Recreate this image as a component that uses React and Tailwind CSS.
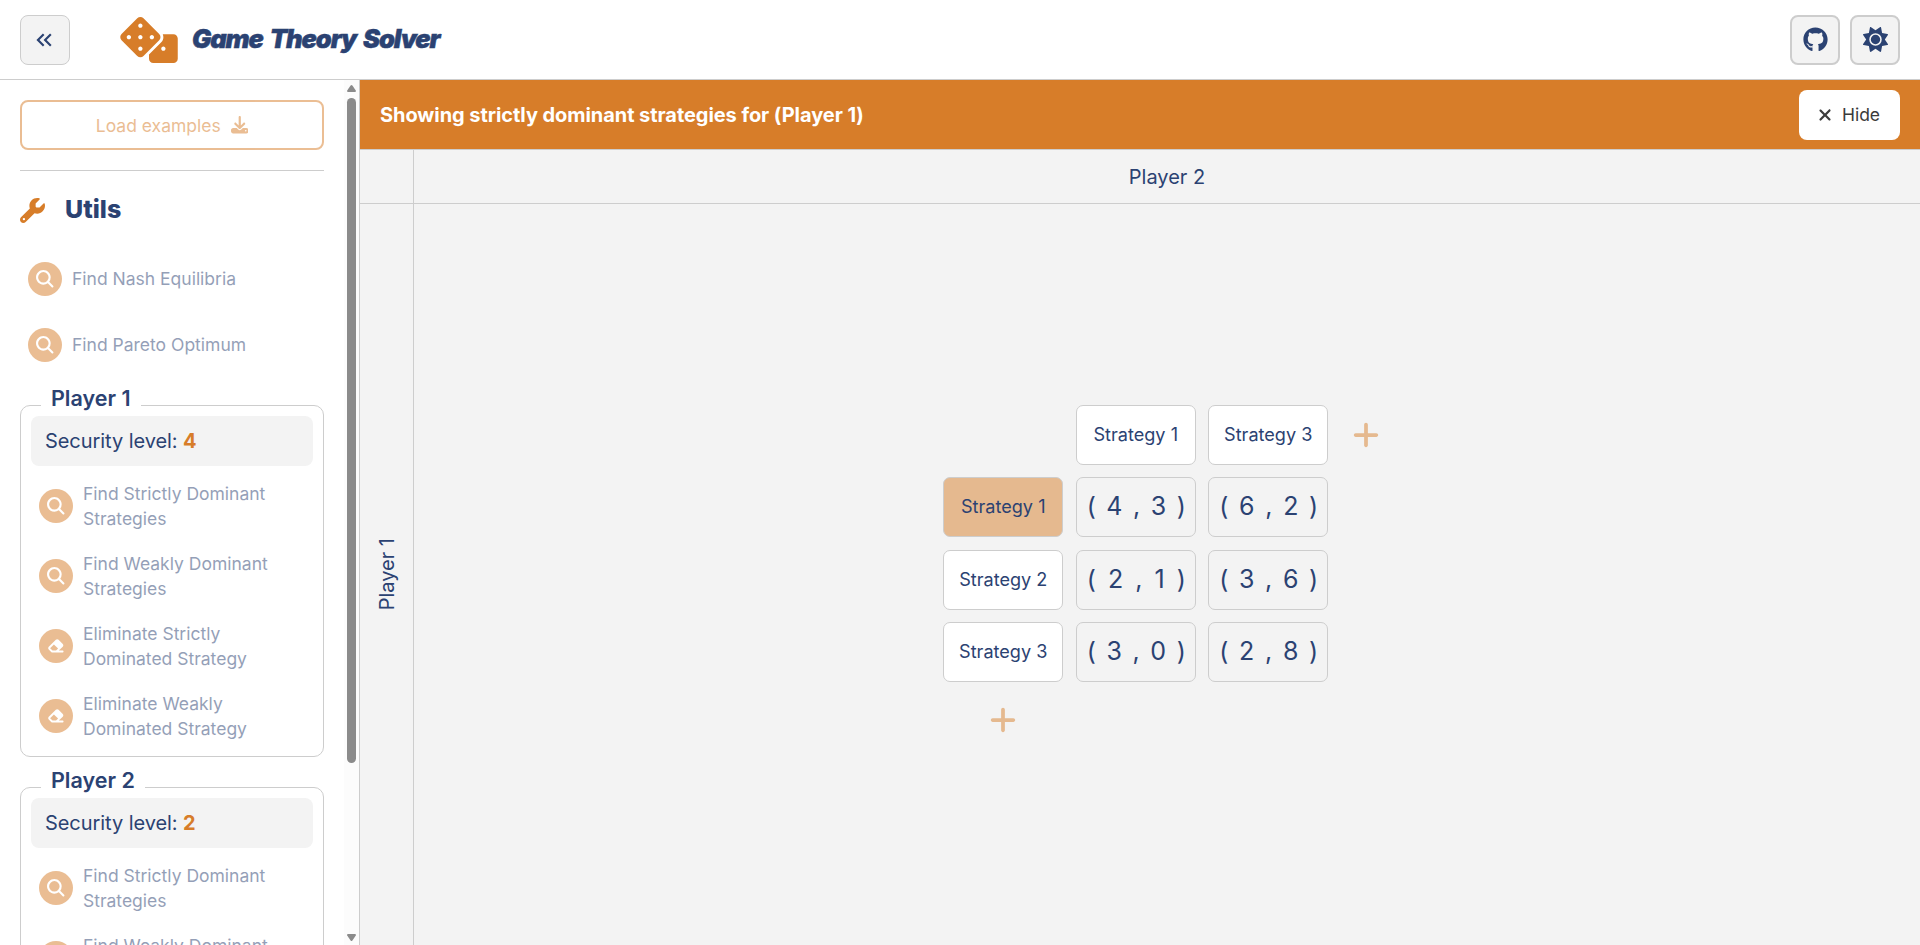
import React from "react";
import { FaDice } from "react-icons/fa";
import { FaDownload, FaEraser, FaGithub, FaPlus, FaSun, FaWrench, FaXmark } from "react-icons/fa6";
import { MdKeyboardDoubleArrowLeft } from "react-icons/md";
import { IoSearch } from "react-icons/io5";

function Util({ icon: Icon, children }) {
  return (
    <div className="flex items-center gap-[10px] opacity-50">
      <span className="grid size-[34px] shrink-0 place-items-center rounded-full bg-[#d77d29] text-white">
        <Icon className={Icon === FaEraser ? "size-[17.5px]" : "size-[21.5px]"} />
      </span>
      <span className="text-[17.5px] leading-[25px]">{children}</span>
    </div>
  );
}

function Player({ n, level, className }) {
  return (
    <fieldset className={"min-w-0 shrink-0 rounded-[10px] border border-[#cdcdcd] px-[10px] pb-[15px] " + className}>
      <legend className="ml-[10px] px-[10px] text-[21.5px] leading-[26px] font-semibold">
        <span className="relative -top-[7px]">Player {n}</span>
      </legend>
      <div className="-mt-[2px] flex h-[50px] items-center gap-[5.5px] rounded-[8px] bg-[#f3f3f3] px-[14px] text-[20px]">
        <span className="tracking-[-0.06px]">Security level:</span>
        <b className="font-bold text-[#d77d29]">{level}</b>
      </div>
      <div className="mt-[15px] flex flex-col gap-[20px] pl-[8px]">
        <Util icon={IoSearch}>Find Strictly Dominant<br />Strategies</Util>
        <Util icon={IoSearch}>Find Weakly Dominant<br />Strategies</Util>
        <Util icon={FaEraser}>Eliminate Strictly<br />Dominated Strategy</Util>
        <Util icon={FaEraser}>Eliminate Weakly<br />Dominated Strategy</Util>
      </div>
    </fieldset>
  );
}

const rows = [
  { name: "Strategy 1", active: true, cells: [[4, 3], [6, 2]] },
  { name: "Strategy 2", cells: [[2, 1], [3, 6]] },
  { name: "Strategy 3", cells: [[3, 0], [2, 8]] },
];

function Strategy({ active, children }) {
  return (
    <div className={"flex h-[60px] items-center justify-center rounded-[7px] border border-[#cdcdcd] text-[18.1px] " + (active ? "bg-[#e5b98f]" : "bg-white")}>
      {children}
    </div>
  );
}

function Payoff({ v }) {
  return (
    <div className="flex h-[60px] items-center justify-between rounded-[7px] border border-[#cdcdcd] pr-[9px] pl-[10px] text-[25px]">
      <span>(</span>
      <span>{v[0]}</span>
      <span>,</span>
      <span>{v[1]}</span>
      <span>)</span>
    </div>
  );
}

function Add({ className }) {
  return (
    <button className={"grid place-items-center text-[#e5b98f] " + (className || "")}>
      <FaPlus className="size-[30px]" />
    </button>
  );
}

function Scrollbar() {
  return (
    <div className="flex w-[15px] flex-col items-center bg-[#fcfcfc]">
      <svg viewBox="0 0 9 7" className="mt-[5px] h-[7px] w-[9px] fill-[#8b8b8b]"><path d="M3.6.6Q4.5-.4 5.4.6L8.8 5.6Q9.2 7 8 7H1Q-.2 7 .2 5.6Z" /></svg>
      <div className="mt-[6px] h-[665px] w-[9px] rounded-full bg-[#8b8b8b]" />
      <svg viewBox="0 0 9 7" className="mt-auto mb-[4px] h-[7px] w-[9px] fill-[#8b8b8b]"><path d="M3.6 6.4Q4.5 7.4 5.4 6.4L8.8 1.4Q9.2 0 8 0H1Q-.2 0 .2 1.4Z" /></svg>
    </div>
  );
}

export default function App() {
  return (
    <div className="flex h-[945px] w-full flex-col overflow-hidden bg-white font-['Inter',sans-serif] text-[#2b4272]">
      <header className="flex h-[80px] shrink-0 items-center border-b border-[#cdcdcd] px-[20px]">
        <button className="grid size-[50px] place-items-center rounded-[8px] border border-[#cdcdcd] bg-[#f3f3f3]">
          <MdKeyboardDoubleArrowLeft className="mr-[2px] size-[26px]" />
        </button>
        <FaDice className="ml-[50px] h-[46px] w-[58px] text-[#d77d29]" />
        <h1 className="-mt-px ml-[14px] text-[25.5px] font-black tracking-[-1.1px] italic [-webkit-text-stroke:0.5px_#2b4272] [word-spacing:3px]">Game Theory Solver</h1>
        <div className="ml-auto flex gap-[10px]">
          <button className="grid size-[50px] place-items-center rounded-[8px] border-2 border-[#cdcdcd] bg-[#f3f3f3]">
            <FaGithub className="size-[25px]" />
          </button>
          <button className="grid size-[50px] place-items-center rounded-[8px] border-2 border-[#cdcdcd] bg-[#f3f3f3]">
            <FaSun className="size-[25px]" />
          </button>
        </div>
      </header>
      <div className="flex min-h-0 flex-1">
        <aside className="flex w-[360px] shrink-0 border-r border-[#cdcdcd]">
          <div className="flex h-full w-[344px] flex-col overflow-hidden px-[20px] pt-[20px]">
            <button className="flex h-[50px] shrink-0 items-center justify-center gap-[10px] rounded-[8px] border-2 border-[#d77d29] text-[17.5px] text-[#d77d29] opacity-50">
              <span className="pt-[2px]">Load examples</span> <FaDownload className="size-[17.5px]" />
            </button>
            <hr className="mt-[20px] border-[#cdcdcd]" />
            <h2 className="mt-[24px] flex h-[30px] shrink-0 items-center gap-[20px] text-[25px] font-extrabold">
              <FaWrench className="size-[25px] text-[#d77d29]" />
              Utils
            </h2>
            <div className="mt-[37px] flex flex-col gap-[32px] pl-[8px]">
              <Util icon={IoSearch}><span className="relative -top-px">Find Nash Equilibria</span></Util>
              <Util icon={IoSearch}><span className="relative -top-px">Find Pareto Optimum</span></Util>
            </div>
            <Player n={1} level={4} className="mt-[30px]" />
            <Player n={2} level={2} className="mt-[17px]" />
          </div>
          <Scrollbar />
        </aside>
        <main className="flex min-w-0 flex-1 flex-col bg-[#f3f3f3]">
          <div className="flex h-[70px] shrink-0 items-center justify-between border-b border-[#cdcdcd] bg-[#d77d29] px-[20px]">
            <p className="text-[20px] font-bold tracking-[-0.06px] text-white">Showing strictly dominant strategies for (Player 1)</p>
            <button className="flex h-[50px] w-[101px] items-center justify-center gap-[8px] rounded-[8px] bg-white pr-[3px] text-[17.5px] text-[#3b3b3b]">
              <FaXmark className="size-[18px]" /> <span className="mt-px">Hide</span>
            </button>
          </div>
          <div className="grid min-h-0 flex-1 grid-cols-[54px_1fr] grid-rows-[54px_1fr]">
            <div className="border-r border-b border-[#cdcdcd]" />
            <div className="flex items-center justify-center border-b border-[#cdcdcd] text-[20px]">Player 2</div>
            <div className="flex items-center justify-center border-r border-[#cdcdcd]">
              <span className="rotate-180 text-[20px] [writing-mode:vertical-rl]">Player 1</span>
            </div>
            <div className="flex items-center justify-center">
              <div className="grid grid-cols-[120px_120px_120px_50px] gap-[12.5px]">
                <span />
                <Strategy>Strategy 1</Strategy>
                <Strategy>Strategy 3</Strategy>
                <Add />
                {rows.map((r) => (
                  <React.Fragment key={r.name}>
                    <Strategy active={r.active}>{r.name}</Strategy>
                    {r.cells.map((v, i) => <Payoff key={i} v={v} />)}
                    <span />
                  </React.Fragment>
                ))}
                <Add className="h-[50px]" />
              </div>
            </div>
          </div>
        </main>
      </div>
    </div>
  );
}
